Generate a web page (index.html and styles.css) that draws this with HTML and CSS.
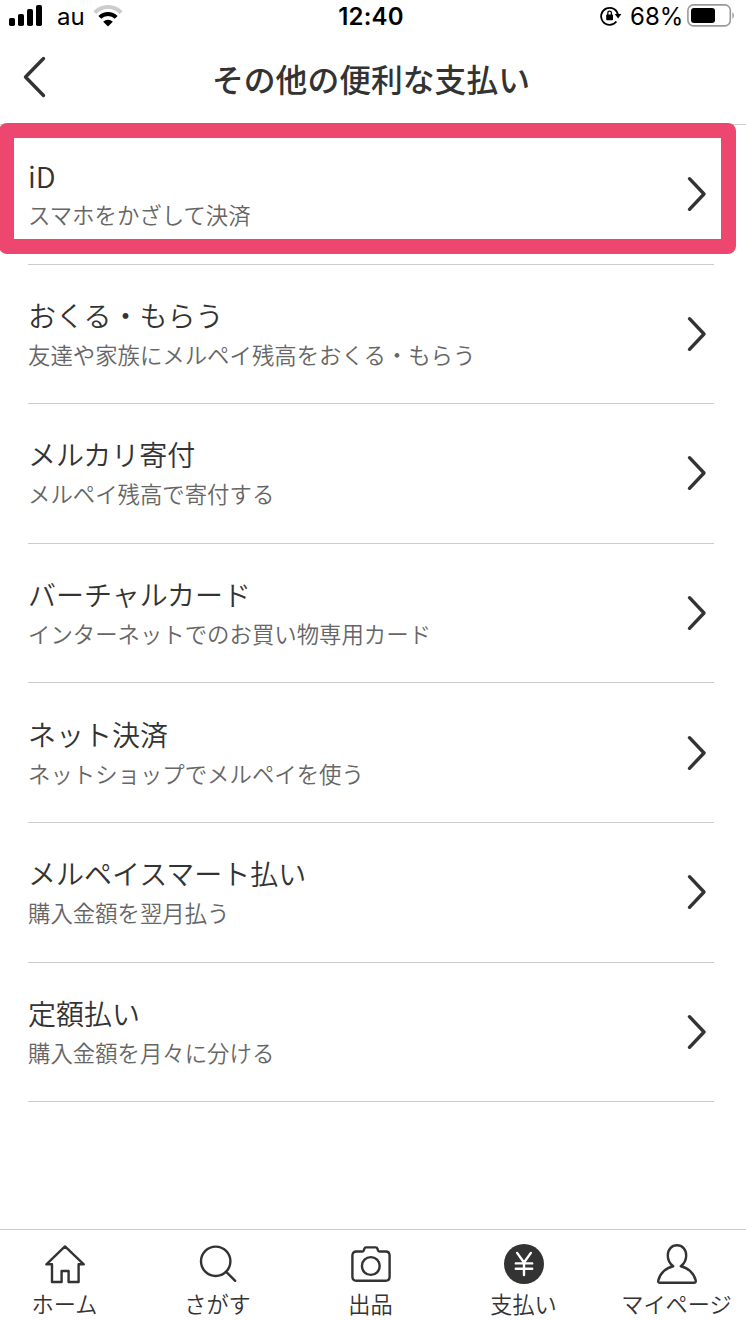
FILE: index.html
```html
<!DOCTYPE html>
<html lang="ja">
<head>
    <meta charset="UTF-8">
    <meta name="viewport" content="width=device-width, initial-scale=1.0">
    <title>その他の便利な支払い</title>
    <link rel="stylesheet" href="styles.css">
</head>
<body>
    <div class="status-bar">
        <div class="status-left">
            <svg class="signal" width="34" height="22" viewBox="0 0 34 22">
                <rect x="0" y="13" width="6" height="8" rx="1.8"/>
                <rect x="9" y="9" width="6" height="12" rx="1.8"/>
                <rect x="18" y="4" width="6" height="17" rx="1.8"/>
                <rect x="27" y="0" width="6" height="21" rx="1.8"/>
            </svg>
            <span class="carrier">au</span>
            <svg class="wifi" width="30" height="22" viewBox="0 0 30 22">
                <path d="M1.8 7.6a18.6 18.6 0 0 1 26.4 0" fill="none" stroke="#ccc" stroke-width="4"/>
                <path d="M6.8 12.4a11.6 11.6 0 0 1 16.4 0" fill="none" stroke="#000" stroke-width="4"/>
                <path d="M15 21.5l-4.8-4.7a6.8 6.8 0 0 1 9.6 0z"/>
            </svg>
        </div>
        <div class="status-time">12:40</div>
        <div class="status-right">
            <svg class="rotation" width="22" height="20" viewBox="0 0 22 20">
                <path d="M18.1 9.5A8.5 8.5 0 1 0 16.400 15.500" fill="none" stroke="#000" stroke-width="1.8"/>
                <path d="M14.8 8h6.6l-3.300 4.400z"/>
                <rect x="6.200" y="8.600" width="6.800" height="5.600" rx="0.8"/>
                <path d="M7.800 9V7a1.800 1.800 0 0 1 3.600 0V9" fill="none" stroke="#000" stroke-width="1.300"/>
            </svg>
            <span class="percent">68%</span>
            <svg class="battery" width="48" height="24" viewBox="0 0 48 24">
                <rect x="0.9" y="0.9" width="42.4" height="21" rx="5.6" fill="none" stroke="#999" stroke-width="1.6"/>
                <rect x="4" y="4" width="24" height="15" rx="3"/>
                <path d="M45.4 8.2c2 .8 2 5.6 0 6.6z" fill="#999"/>
            </svg>
        </div>
    </div>

    <div class="header">
        <svg class="back" width="24" height="42" viewBox="0 0 24 42">
            <path d="M20.5 2.5L2.5 21l18 18.5"/>
        </svg>
        <h1>その他の便利な支払い</h1>
    </div>

    <ul class="menu">
        <li class="highlight">
            <div class="item-text">
                <div class="item-title latin">iD</div>
                <div class="item-sub">スマホをかざして決済</div>
            </div>
            <svg class="arrow" width="20" height="36" viewBox="0 0 20 36"><path d="M2.5 2.7L17 18 2.5 33.3"/></svg>
        </li>
        <li>
            <div class="item-text">
                <div class="item-title">おくる・もらう</div>
                <div class="item-sub">友達や家族にメルペイ残高をおくる・もらう</div>
            </div>
            <svg class="arrow" width="20" height="36" viewBox="0 0 20 36"><path d="M2.5 2.7L17 18 2.5 33.3"/></svg>
        </li>
        <li>
            <div class="item-text">
                <div class="item-title">メルカリ寄付</div>
                <div class="item-sub">メルペイ残高で寄付する</div>
            </div>
            <svg class="arrow" width="20" height="36" viewBox="0 0 20 36"><path d="M2.5 2.7L17 18 2.5 33.3"/></svg>
        </li>
        <li>
            <div class="item-text">
                <div class="item-title">バーチャルカード</div>
                <div class="item-sub">インターネットでのお買い物専用カード</div>
            </div>
            <svg class="arrow" width="20" height="36" viewBox="0 0 20 36"><path d="M2.5 2.7L17 18 2.5 33.3"/></svg>
        </li>
        <li>
            <div class="item-text">
                <div class="item-title">ネット決済</div>
                <div class="item-sub">ネットショップでメルペイを使う</div>
            </div>
            <svg class="arrow" width="20" height="36" viewBox="0 0 20 36"><path d="M2.5 2.7L17 18 2.5 33.3"/></svg>
        </li>
        <li>
            <div class="item-text">
                <div class="item-title">メルペイスマート払い</div>
                <div class="item-sub">購入金額を翌月払う</div>
            </div>
            <svg class="arrow" width="20" height="36" viewBox="0 0 20 36"><path d="M2.5 2.7L17 18 2.5 33.3"/></svg>
        </li>
        <li>
            <div class="item-text">
                <div class="item-title">定額払い</div>
                <div class="item-sub">購入金額を月々に分ける</div>
            </div>
            <svg class="arrow" width="20" height="36" viewBox="0 0 20 36"><path d="M2.5 2.7L17 18 2.5 33.3"/></svg>
        </li>
    </ul>

    <div class="tab-bar">
        <div class="tabs">
            <div class="tab">
                <svg width="44" height="44" viewBox="0 0 44 44">
                    <path d="M22 4.4L3.4 22.3H9V40h9.6V29h7V40h10V22.3h5.2z"/>
                </svg>
                <span>ホーム</span>
            </div>
            <div class="tab">
                <svg width="44" height="44" viewBox="0 0 44 44">
                    <circle cx="19.7" cy="19.3" r="14.7"/>
                    <path d="M30.2 29.8l9 9"/>
                </svg>
                <span>さがす</span>
            </div>
            <div class="tab">
                <svg width="44" height="44" viewBox="0 0 44 44">
                    <path d="M3.4 13.5q0-4 4-4h5.8q1.2 0 1.6-1.1l.6-1.8q.4-1.2 1.6-1.2h9.8q1.2 0 1.6 1.2l.6 1.8q.4 1.1 1.6 1.1h6q4 0 4 4v21.2q0 4-4 4H7.4q-4 0-4-4z"/>
                    <circle cx="21.8" cy="24" r="8.9"/>
                </svg>
                <span>出品</span>
            </div>
            <div class="tab">
                <svg width="44" height="44" viewBox="0 0 44 44">
                    <circle class="coin" cx="22" cy="22" r="20"/>
                    <path class="yen" d="M15.100 10.900L22 20.500l6.900-9.600M22 20.500v12.500M13.800 21.4h16.4M13.800 26.800h16.400"/>
                </svg>
                <span>支払い</span>
            </div>
            <div class="tab">
                <svg width="44" height="44" viewBox="0 0 44 44">
                    <path d="M18.200 24.300c-3-2.400-5.400-6.500-5.400-10.900 0-6 3.900-10.100 9.200-10.100s9.200 4.100 9.200 10.100c0 4.400-2.400 8.500-5.400 10.900C33.200 25.800 39.200 31.600 40.700 38.500q.4 2.200-1.800 2.200H5.100q-2.200 0-1.800-2.200C4.800 31.600 10.800 25.800 18.200 24.300z"/>
                </svg>
                <span>マイページ</span>
            </div>
        </div>
    </div>
</body>
</html>
```
FILE: styles.css
```css
* {
    box-sizing: border-box;
}
body {
    margin: 0;
    height: 1320px;
    display: flex;
    flex-direction: column;
    overflow: hidden;
    background-color: #fff;
    color: #333;
    font-family: "Noto Sans CJK JP", sans-serif;
}
svg {
    display: block;
    flex: none;
}

/* status bar */
.status-bar {
    height: 34px;
    display: grid;
    grid-template-columns: 1fr auto 1fr;
    padding: 0 11px 0 9px;
    color: #000;
    font-family: Inter, sans-serif;
    font-size: 24px;
    line-height: 34px;
}
.status-left,
.status-right {
    display: flex;
}
.status-right {
    justify-content: flex-end;
}
.status-time {
    margin-left: -2px;
    font-weight: 600;
    letter-spacing: 0.2px;
}
.signal {
    margin-top: 5px;
}
.carrier {
    margin-left: 14px;
    width: 36px;
}
.wifi {
    margin-top: 5px;
}
.rotation {
    margin: 6px 8px 0 0;
}
.percent {
    width: 57px;
}
.battery {
    margin-top: 4px;
}

/* header */
.header {
    height: 91px;
    display: grid;
    grid-template-columns: 60px 1fr 64px;
    align-items: center;
    border-bottom: 1px solid #ccc;
}
.back {
    margin: -5px 0 0 23px;
}
h1 {
    margin: -3px 0 0;
    text-align: center;
    font-size: 31.8px;
    font-weight: 500;
    line-height: 44px;
}
.back path,
.arrow path {
    fill: none;
    stroke: #333;
    stroke-width: 3.4;
    stroke-linecap: round;
    stroke-linejoin: round;
}

/* menu */
.menu {
    margin: 0;
    padding: 0 32px 0 28px;
    list-style: none;
    flex: 1;
}
.menu li {
    height: 139.6px;
    display: flex;
    align-items: center;
    justify-content: space-between;
    padding-right: 7px;
    border-bottom: 1px solid #ccc;
    position: relative;
}
.item-title {
    font-size: 28px;
    font-weight: 350;
    line-height: 40px;
}
.latin {
    font-size: 29px;
}
.item-sub {
    color: #666;
    font-size: 22.4px;
    font-weight: 350;
    line-height: 38px;
}
.highlight::after {
    content: "";
    box-sizing: border-box;
    position: absolute;
    left: -29px;
    top: -2px;
    width: 737px;
    height: 131px;
    border: 15px solid #ed466f;
    border-radius: 8px;
}

/* bottom tabs */
.tab-bar {
    height: 91px;
    border-top: 1px solid #ccc;
}
.tabs {
    width: 765px;
    margin-left: -11.5px;
    display: grid;
    grid-template-columns: repeat(5, 1fr);
    padding-top: 12px;
}
.tab {
    display: flex;
    flex-direction: column;
    align-items: center;
    font-size: 22.2px;
    font-weight: 350;
    line-height: 35px;
}
.tab span {
    margin-right: 1px;
}
.tab svg {
    fill: none;
    stroke: #333;
    stroke-width: 2.4;
    stroke-linecap: round;
    stroke-linejoin: round;
}
.tab .coin {
    fill: #333;
    stroke: none;
}
.tab .yen {
    stroke: #fff;
}
```
